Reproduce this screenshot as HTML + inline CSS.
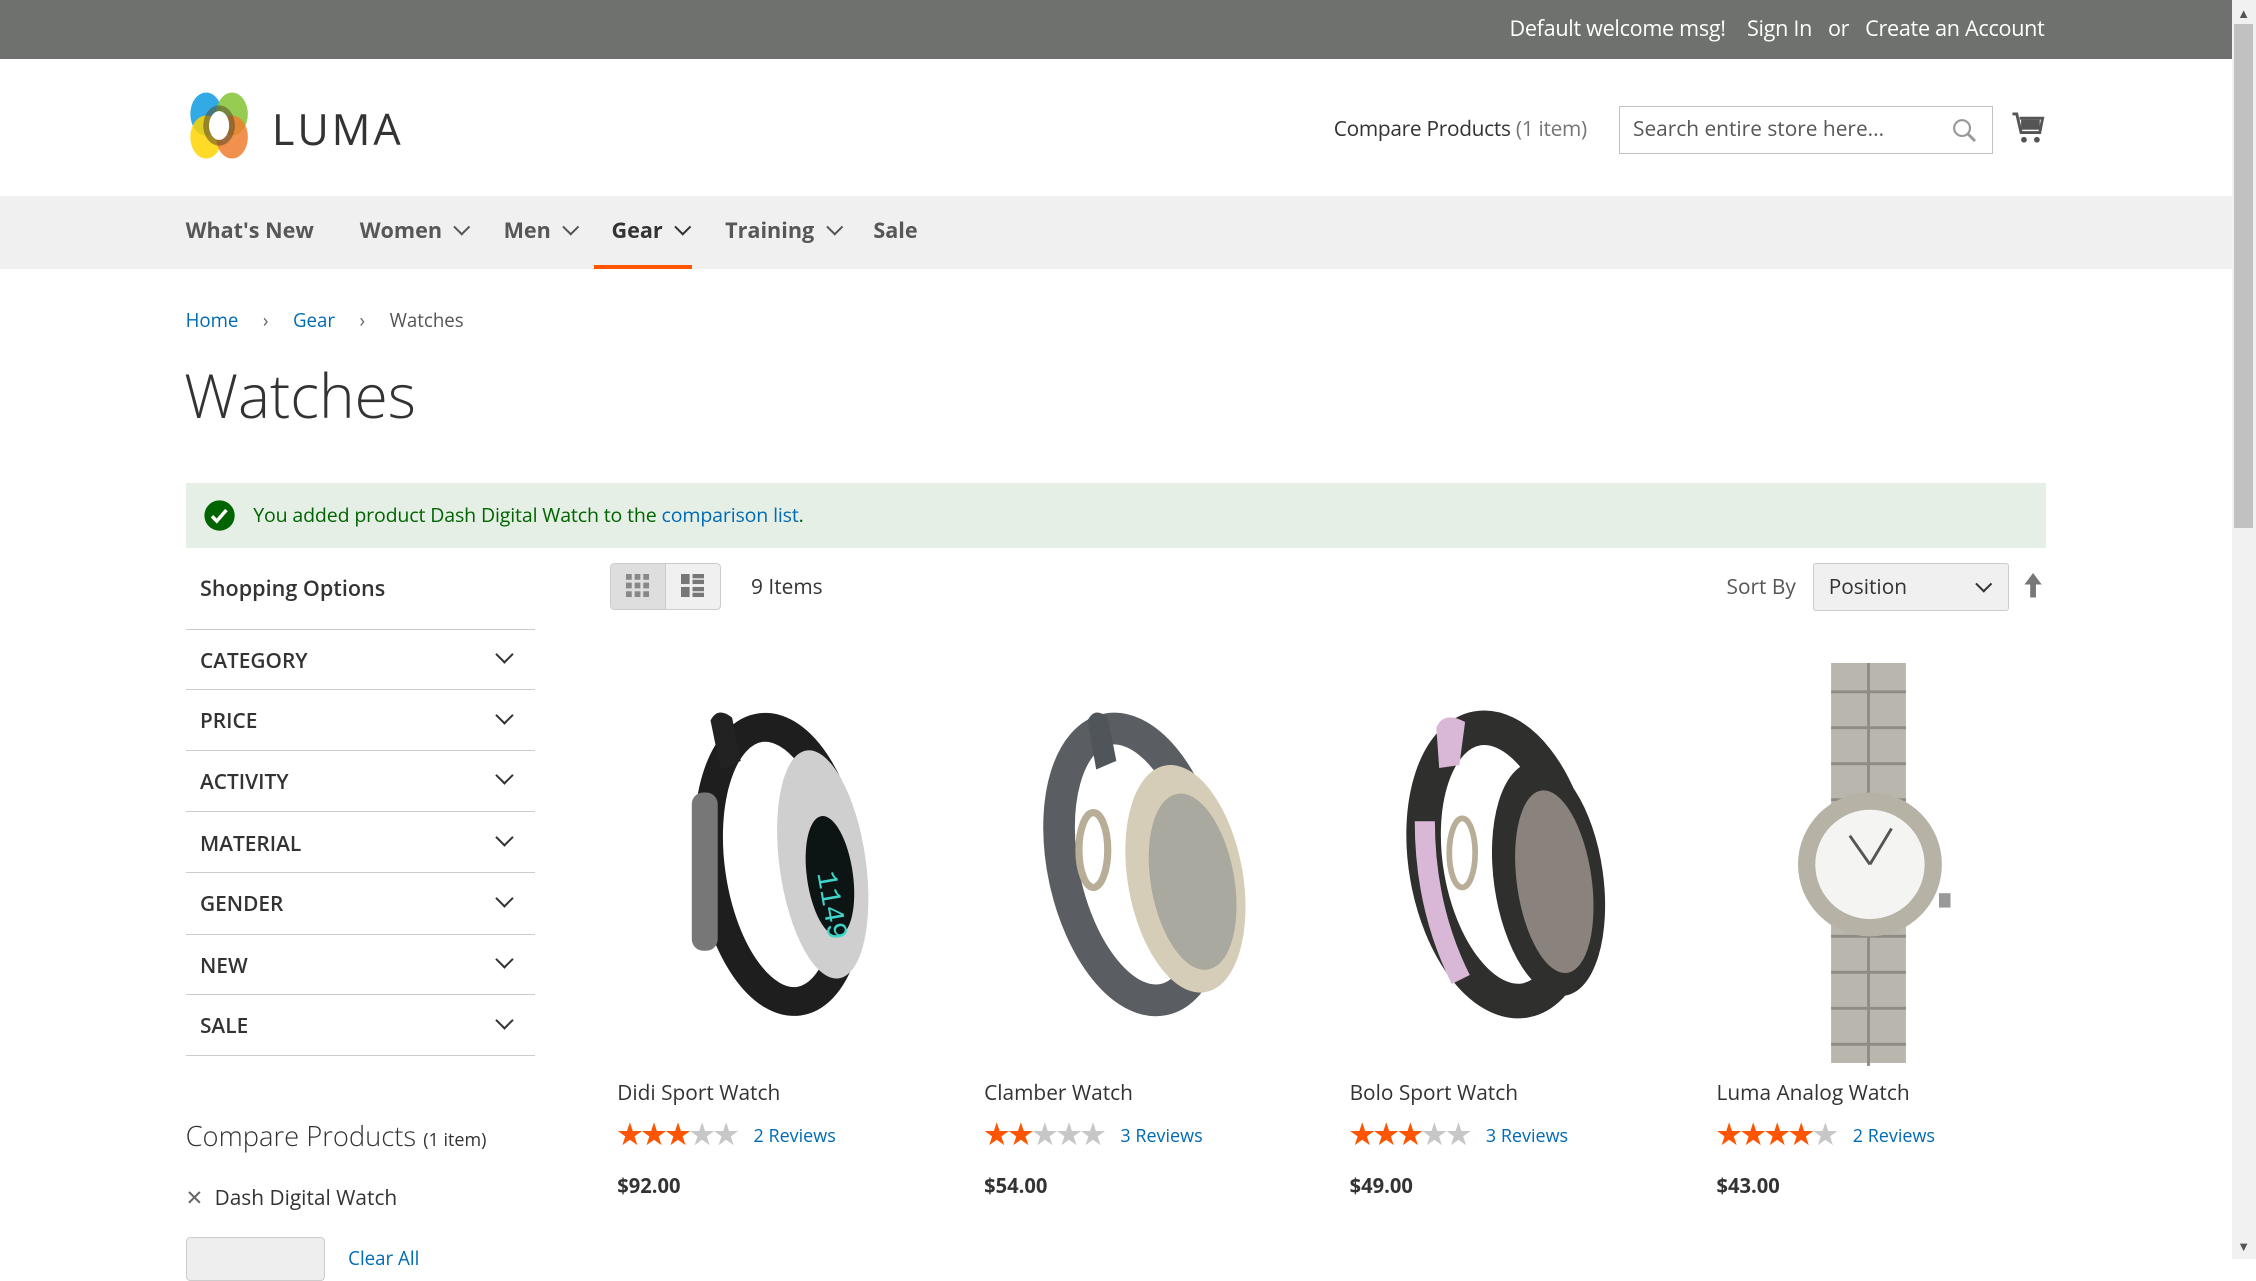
<!DOCTYPE html>
<html><head><meta charset="utf-8"><style>
html{zoom:1.43878}
*{box-sizing:border-box;margin:0;padding:0}
body{width:1568px;height:875px;overflow:hidden;font-family:"Open Sans","Liberation Sans",sans-serif;color:#333;background:#fff;position:relative}
.a{position:absolute;white-space:nowrap}
.top{left:0;top:0;width:1551px;height:41px;background:#6e716e}
.nav{left:0;top:136px;width:1551px;height:51px;background:#f0f0f0}
.chev{display:inline-block;width:8px;height:8px;border-right:1.5px solid #575757;border-bottom:1.5px solid #575757;transform:rotate(45deg);margin-left:10px;position:relative;top:-4px}
.link{color:#006bb4}
.flt{left:129px;width:243px;height:43px;border-top:1px solid #ccc;font-size:14.5px;font-weight:600;padding:12px 10px;color:#333}
.flt .chev{position:absolute;right:17px;top:13px;width:9px;height:9px;border-color:#333}
.pn{font-size:14.5px;color:#333}
.pr{font-size:14px;font-weight:bold}
.st{font-size:22px;letter-spacing:-3px;color:#ff5501;position:relative;top:2px;margin-right:8px}
.st b{color:#c7c7c7;font-weight:normal}
.rv{font-size:12.5px;color:#006bb4}
.ni{top:150px;font-size:15px;font-weight:bold;color:#575757}
</style></head><body>
<div class="a top"></div>
<div class="a" style="right:147px;top:10px;font-size:15px;color:#fff;letter-spacing:-0.2px">Default welcome msg!&nbsp;&nbsp;&nbsp;&nbsp;Sign In&nbsp;&nbsp;&nbsp;or&nbsp;&nbsp;&nbsp;Create an Account</div>
<div class="a" style="left:1551px;top:0;width:17px;height:875px;background:#f1f1f1"></div>
<div class="a" style="left:1553px;top:17px;width:13px;height:350px;background:#c1c1c1"></div>
<div class="a" style="left:1555px;top:3px;font-size:9px;color:#555">▲</div>
<div class="a" style="left:1555px;top:860px;font-size:9px;color:#555">▼</div>
<svg class="a" style="left:129px;top:63px" width="48" height="48" viewBox="0 0 48 48">
<ellipse cx="14" cy="16" rx="11" ry="15" fill="#1ba1e2" opacity=".9"/>
<ellipse cx="32" cy="16" rx="11" ry="15" fill="#8cc63f" opacity=".9"/>
<ellipse cx="14" cy="32" rx="11" ry="15" fill="#ffd400" opacity=".85"/>
<ellipse cx="32" cy="32" rx="11" ry="15" fill="#f07c2f" opacity=".85"/>
<ellipse cx="23" cy="24" rx="11" ry="14" fill="#5a4a2a" opacity=".55"/>
<ellipse cx="23" cy="24" rx="7" ry="10" fill="#fff"/>
</svg>
<div class="a" style="left:189px;top:69px;font-size:30px;letter-spacing:2px;color:#333">LUMA</div>
<div class="a" style="left:927px;top:80px;font-size:14.5px;letter-spacing:-0.2px">Compare Products <span style="color:#757575">(1 item)</span></div>
<div class="a" style="left:1125px;top:74px;width:260px;height:33px;border:1px solid #c2c2c2"></div>
<div class="a" style="left:1135px;top:80px;font-size:14.5px;color:#575757">Search entire store here...</div>
<svg class="a" style="left:1357px;top:82px" width="18" height="18" viewBox="0 0 18 18"><circle cx="7" cy="7" r="5.5" fill="none" stroke="#999" stroke-width="1.5"/><path d="M11 11l5 5" stroke="#999" stroke-width="2"/></svg>
<svg class="a" style="left:1398px;top:77px" width="24" height="24" viewBox="0 0 24 24"><path d="M1 2h3l3 13h13l2-10H6" fill="none" stroke="#555" stroke-width="2"/><rect x="7" y="6" width="13" height="7" fill="#555"/><circle cx="9" cy="20" r="2" fill="#555"/><circle cx="18" cy="20" r="2" fill="#555"/></svg>
<div class="a nav"></div>
<div class="a ni" style="left:129px">What's New</div>
<div class="a ni" style="left:250px">Women<span class="chev"></span></div>
<div class="a ni" style="left:350px">Men<span class="chev"></span></div>
<div class="a ni" style="left:425px;color:#333">Gear<span class="chev" style="border-color:#333"></span></div>
<div class="a ni" style="left:504px">Training<span class="chev"></span></div>
<div class="a ni" style="left:607px">Sale</div>
<div class="a" style="left:413px;top:184px;width:68px;height:3px;background:#ff5501"></div>
<div class="a" style="left:129px;top:214px;font-size:13px"><span class="link">Home</span><span style="margin:0 17px;color:#666">›</span><span class="link">Gear</span><span style="margin:0 17px;color:#666">›</span><span style="color:#555">Watches</span></div>
<div class="a" style="left:128px;top:245px;font-size:42px;font-weight:300;color:#333">Watches</div>
<div class="a" style="left:129px;top:336px;width:1293px;height:45px;background:#e5efe5"></div>
<svg class="a" style="left:141px;top:347px" width="23" height="23" viewBox="0 0 24 24"><circle cx="12" cy="12" r="11" fill="#006400"/><path d="M6.5 12.5l3.5 3.5 7-8" fill="none" stroke="#fff" stroke-width="2.5"/></svg>
<div class="a" style="left:176px;top:348px;font-size:13.6px;color:#006400;letter-spacing:-0.1px">You added product Dash Digital Watch to the <span class="link">comparison list</span>.</div>
<div class="a" style="left:139px;top:399px;font-size:15px;font-weight:600">Shopping Options</div>
<div class="a flt" style="top:437px">CATEGORY<span class="chev"></span></div>
<div class="a flt" style="top:479px">PRICE<span class="chev"></span></div>
<div class="a flt" style="top:521px">ACTIVITY<span class="chev"></span></div>
<div class="a flt" style="top:564px">MATERIAL<span class="chev"></span></div>
<div class="a flt" style="top:606px">GENDER<span class="chev"></span></div>
<div class="a flt" style="top:649px">NEW<span class="chev"></span></div>
<div class="a flt" style="top:691px;border-bottom:1px solid #ccc">SALE<span class="chev"></span></div>
<div class="a" style="left:129px;top:777px;font-size:19px;font-weight:300;color:#333">Compare Products <span style="font-size:12.5px;font-weight:normal">(1 item)</span></div>
<div class="a" style="left:129px;top:823px;font-size:14.5px"><span style="color:#666;margin-right:8px">✕</span>Dash Digital Watch</div>
<div class="a" style="left:129px;top:860px;width:97px;height:30px;background:#eee;border:1px solid #ccc;border-radius:3px"></div>
<div class="a" style="left:242px;top:866px;font-size:13px;color:#006bb4">Clear All</div>
<div class="a" style="left:424px;top:391px;width:77px;height:33px;border:1px solid #ccc;border-radius:3px;background:#f0f0f0;overflow:hidden"><div style="width:38px;height:33px;background:#dedede;border-right:1px solid #ccc"></div></div>
<svg class="a" style="left:435px;top:399px" width="17" height="17" viewBox="0 0 17 17" fill="#888"><rect x="0" y="0" width="4" height="4"/><rect x="6" y="0" width="4" height="4"/><rect x="12" y="0" width="4" height="4"/><rect x="0" y="6" width="4" height="4"/><rect x="6" y="6" width="4" height="4"/><rect x="12" y="6" width="4" height="4"/><rect x="0" y="12" width="4" height="4"/><rect x="6" y="12" width="4" height="4"/><rect x="12" y="12" width="4" height="4"/></svg>
<svg class="a" style="left:473px;top:399px" width="17" height="17" viewBox="0 0 17 17" fill="#777"><rect x="0" y="0" width="6" height="7"/><rect x="8" y="0" width="8" height="3"/><rect x="8" y="4" width="8" height="3"/><rect x="0" y="9" width="6" height="7"/><rect x="8" y="9" width="8" height="3"/><rect x="8" y="13" width="8" height="3"/></svg>
<div class="a" style="left:522px;top:398px;font-size:14.5px">9 Items</div>
<div class="a" style="left:1200px;top:398px;font-size:14.5px;color:#555">Sort By</div>
<div class="a" style="left:1260px;top:391px;width:136px;height:34px;background:#f0f0f0;border:1px solid #ccc;border-radius:2px"></div>
<div class="a" style="left:1271px;top:398px;font-size:14.5px">Position</div>
<span class="chev" style="position:absolute;left:1375px;top:402px;border-color:#333;margin:0"></span>
<svg class="a" style="left:1406px;top:398px" width="14" height="18" viewBox="0 0 14 18"><path d="M7 0L1 8h4v9h4V8h4z" fill="#777"/></svg>
<svg class="a" style="left:429px;top:461px" width="230" height="280" viewBox="0 0 230 280">
<ellipse cx="113" cy="140" rx="48" ry="96" fill="none" stroke="#1e1e1e" stroke-width="20" transform="rotate(-8 113 140)"/>
<path d="M65 40 q5-10 15-2 l6 30 -14 6z" fill="#222"/>
<ellipse cx="143" cy="140" rx="30" ry="80" fill="#cfcfd0" transform="rotate(-8 143 140)"/>
<ellipse cx="148" cy="148" rx="16" ry="42" fill="#0c1414" transform="rotate(-8 148 148)"/>
<text x="140" y="155" font-size="20" fill="#3dd6c8" font-family="Liberation Mono" transform="rotate(80 145 150)">1149</text>
<rect x="52" y="90" width="18" height="110" rx="8" fill="#777"/>
</svg>
<svg class="a" style="left:684px;top:461px" width="230" height="280" viewBox="0 0 230 280">
<ellipse cx="105" cy="140" rx="50" ry="96" fill="none" stroke="#5a5e63" stroke-width="22" transform="rotate(-12 105 140)"/>
<path d="M72 40 q5-10 14-2 l6 30 -14 6z" fill="#50555a"/>
<ellipse cx="76" cy="130" rx="10" ry="26" fill="none" stroke="#b8ae98" stroke-width="5"/>
<ellipse cx="140" cy="150" rx="40" ry="80" fill="#d6cdb8" transform="rotate(-10 140 150)"/>
<ellipse cx="145" cy="152" rx="29" ry="62" fill="#aaa99f" transform="rotate(-10 145 152)"/>
</svg>
<svg class="a" style="left:938px;top:461px" width="230" height="280" viewBox="0 0 230 280">
<ellipse cx="105" cy="140" rx="52" ry="96" fill="none" stroke="#2f302e" stroke-width="24" transform="rotate(-10 105 140)"/>
<path d="M52 110 q0 60 25 110" fill="none" stroke="#d8b8d6" stroke-width="14"/>
<path d="M60 45 q5-12 20-4 l-4 30 -14 2z" fill="#d8b8d6"/>
<ellipse cx="78" cy="132" rx="9" ry="24" fill="none" stroke="#b8ae98" stroke-width="4"/>
<ellipse cx="138" cy="150" rx="38" ry="82" fill="#2f302e" transform="rotate(-8 138 150)"/>
<ellipse cx="142" cy="152" rx="26" ry="64" fill="#8a827c" transform="rotate(-8 142 152)"/>
</svg>
<svg class="a" style="left:1193px;top:461px" width="230" height="280" viewBox="0 0 230 280">
<rect x="80" y="0" width="52" height="278" fill="#b9b6ae"/>
<g stroke="#8e8b84" stroke-width="2"><path d="M80 20h52M80 45h52M80 70h52M80 95h52M80 190h52M80 215h52M80 240h52M80 265h52M106 0v280"/></g>
<circle cx="107" cy="140" r="50" fill="#b7b2a6"/>
<circle cx="107" cy="140" r="38" fill="#f4f4f2"/>
<path d="M107 140l-14-20M107 140l15-25" stroke="#555" stroke-width="2"/>
<rect x="155" y="160" width="8" height="10" fill="#999"/>
</svg>
<div class="a pn" style="left:429px;top:750px">Didi Sport Watch</div>
<div class="a pn" style="left:684px;top:750px">Clamber Watch</div>
<div class="a pn" style="left:938px;top:750px">Bolo Sport Watch</div>
<div class="a pn" style="left:1193px;top:750px">Luma Analog Watch</div>
<div class="a" style="left:428px;top:771px"><span class="st">★★★<b>★★</b></span> <span class="rv">2 Reviews</span></div>
<div class="a" style="left:683px;top:771px"><span class="st">★★<b>★★★</b></span> <span class="rv">3 Reviews</span></div>
<div class="a" style="left:937px;top:771px"><span class="st">★★★<b>★★</b></span> <span class="rv">3 Reviews</span></div>
<div class="a" style="left:1192px;top:771px"><span class="st">★★★★<b>★</b></span> <span class="rv">2 Reviews</span></div>
<div class="a pr" style="left:429px;top:814px">$92.00</div>
<div class="a pr" style="left:684px;top:814px">$54.00</div>
<div class="a pr" style="left:938px;top:814px">$49.00</div>
<div class="a pr" style="left:1193px;top:814px">$43.00</div>
</body></html>
